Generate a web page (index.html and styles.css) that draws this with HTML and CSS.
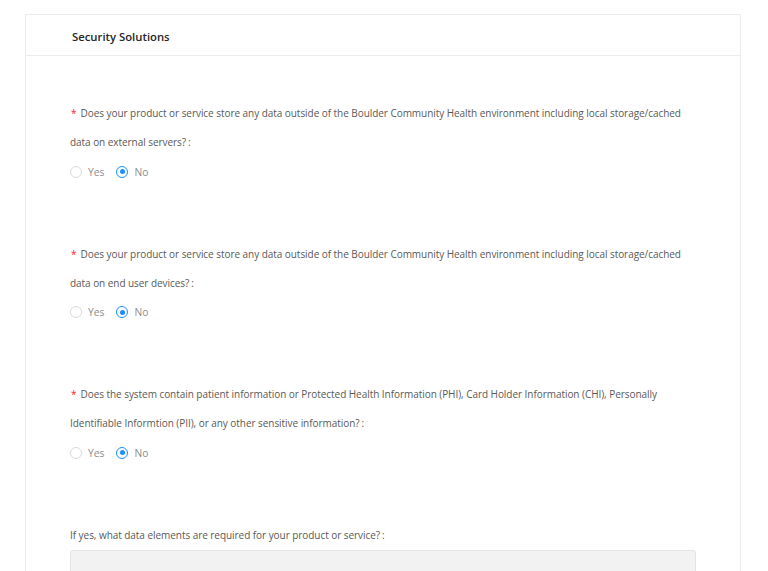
FILE: index.html
```html
<!DOCTYPE html>
<html>
<head>
<meta charset="utf-8">
<link rel="stylesheet" href="styles.css">
</head>
<body>
<div class="card">
  <div class="card-head">Security Solutions</div>
  <div class="card-body">
    <div class="item">
      <div class="label required">Does your product or service store any data outside of the Boulder Community Health environment including local storage/cached data on external servers?</div>
      <div class="radios">
        <label class="radio"><span class="dot"></span><span class="rtext">Yes</span></label>
        <label class="radio"><span class="dot on"></span><span class="rtext">No</span></label>
      </div>
    </div>
    <div class="item">
      <div class="label required">Does your product or service store any data outside of the Boulder Community Health environment including local storage/cached data on end user devices?</div>
      <div class="radios">
        <label class="radio"><span class="dot"></span><span class="rtext">Yes</span></label>
        <label class="radio"><span class="dot on"></span><span class="rtext">No</span></label>
      </div>
    </div>
    <div class="item">
      <div class="label required">Does the system contain patient information or Protected Health Information (PHI), Card Holder Information (CHI), Personally Identifiable Informtion (PII), or any other sensitive information?</div>
      <div class="radios">
        <label class="radio"><span class="dot"></span><span class="rtext">Yes</span></label>
        <label class="radio"><span class="dot on"></span><span class="rtext">No</span></label>
      </div>
    </div>
    <div class="item">
      <div class="label">If yes, what data elements are required for your product or service?</div>
      <div class="textarea"></div>
    </div>
  </div>
</div>
</body>
</html>
```
FILE: styles.css
```css
html, body {
  margin: 0;
  padding: 0;
  background: #ffffff;
  font-family: "Open Sans", "Noto Sans", sans-serif;
  color: #595959;
}
.card {
  margin: 14px 0 0 25px;
  width: 716px;
  border: 1px solid #ececec;
  border-bottom: none;
  height: 600px;
  box-sizing: border-box;
}
.card-head {
  height: 41px;
  display: flex;
  align-items: center;
  padding: 3px 0 0 46px;
  box-sizing: border-box;
  font-size: 11.3px;
  font-weight: 600;
  color: #262626;
  border-bottom: 1px solid #ececec;
}
.card-body {
  padding: 43px 44px 0 44px;
}
.item {
  margin-bottom: 53.5px;
}
.label {
  font-size: 10px;
  letter-spacing: -0.05px;
  line-height: 29px;
  color: #595959;
}
.label.required::before {
  content: "*";
  color: #f5222d;
  margin: 0 4px 0 1px;
}
.label::after {
  content: ":";
  margin-left: 2px;
}
.radios {
  display: flex;
  height: 29px;
  align-items: center;
}
.radio {
  display: flex;
  align-items: center;
  margin-right: 12px;
  font-size: 10.3px;
  color: #8c8c8c;
}
.dot {
  width: 12px;
  height: 12px;
  border-radius: 50%;
  border: 1px solid #d9d9d9;
  box-sizing: border-box;
  position: relative;
  background: #fff;
}
.dot.on {
  border-color: #1890ff;
}
.dot.on::after {
  content: "";
  position: absolute;
  left: 2.5px;
  top: 2.5px;
  width: 5px;
  height: 5px;
  border-radius: 50%;
  background: #1890ff;
}
.rtext {
  padding-left: 6px;
}
.textarea {
  height: 60px;
  background: #f2f2f2;
  border: 1px solid #e3e3e3;
  border-radius: 3px;
}
```
